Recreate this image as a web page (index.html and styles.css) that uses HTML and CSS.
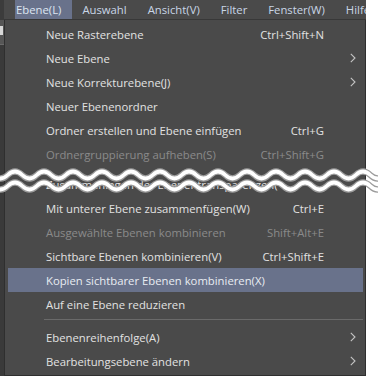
FILE: index.html
```html
<!DOCTYPE html>
<html lang="de">
<head>
  <meta charset="UTF-8" />
  <title>Ebene-Menü</title>
  <link rel="stylesheet" href="styles.css">
</head>
<body>
  <div class="app">
    <div class="side">
      <div class="side-top"></div>
      <div class="side-tool"><span class="side-icon"></span></div>
      <div class="side-rest"></div>
    </div>

    <div class="main">
      <div class="menubar">
        <span class="mb-item active">Ebene(L)</span>
        <span class="mb-item">Auswahl</span>
        <span class="mb-item">Ansicht(V)</span>
        <span class="mb-item">Filter</span>
        <span class="mb-item">Fenster(W)</span>
        <span class="mb-item">Hilfe(H)</span>
      </div>

      <div class="menu">
        <div class="row"><span class="label">Neue Rasterebene</span><span class="key">Ctrl+Shift+N</span><span class="sub"></span></div>
        <div class="row"><span class="label">Neue Ebene</span><span class="key"></span><span class="sub"><svg width="6" height="10" viewBox="0 0 6 10"><path d="M0.8 0.8 L5 5 L0.8 9.2" /></svg></span></div>
        <div class="row"><span class="label">Neue Korrekturebene(J)</span><span class="key"></span><span class="sub"><svg width="6" height="10" viewBox="0 0 6 10"><path d="M0.8 0.8 L5 5 L0.8 9.2" /></svg></span></div>
        <div class="row"><span class="label">Neuer Ebenenordner</span><span class="key"></span><span class="sub"></span></div>
        <div class="row"><span class="label">Ordner erstellen und Ebene einfügen</span><span class="key">Ctrl+G</span><span class="sub"></span></div>
        <div class="row off"><span class="label">Ordnergruppierung aufheben(S)</span><span class="key">Ctrl+Shift+G</span><span class="sub"></span></div>
        <div class="cut"></div>
        <div class="row"><span class="label">Zusammenlegen der Ebenentransparenzen(</span><span class="key"></span><span class="sub"></span></div>
        <div class="row"><span class="label">Mit unterer Ebene zusammenfügen(W)</span><span class="key">Ctrl+E</span><span class="sub"></span></div>
        <div class="row off"><span class="label">Ausgewählte Ebenen kombinieren</span><span class="key">Shift+Alt+E</span><span class="sub"></span></div>
        <div class="row"><span class="label">Sichtbare Ebenen kombinieren(V)</span><span class="key">Ctrl+Shift+E</span><span class="sub"></span></div>
        <div class="row hover"><span class="label">Kopien sichtbarer Ebenen kombinieren(X)</span><span class="key"></span><span class="sub"></span></div>
        <div class="row"><span class="label">Auf eine Ebene reduzieren</span><span class="key"></span><span class="sub"></span></div>
        <div class="sep"></div>
        <div class="row"><span class="label">Ebenenreihenfolge(A)</span><span class="key"></span><span class="sub"><svg width="6" height="10" viewBox="0 0 6 10"><path d="M0.8 0.8 L5 5 L0.8 9.2" /></svg></span></div>
        <div class="row"><span class="label">Bearbeitungsebene ändern</span><span class="key"></span><span class="sub"><svg width="6" height="10" viewBox="0 0 6 10"><path d="M0.8 0.8 L5 5 L0.8 9.2" /></svg></span></div>
      </div>
    </div>
  </div>

  <!-- break mark laid over the cut in the list -->
  <svg class="waves" width="378" height="40" viewBox="0 0 378 40">
    <defs>
      <path id="w" d="M-21.25 15 Q-14 8 -6.75 15 T7.75 15 T22.25 15 T36.75 15 T51.25 15 T65.75 15 T80.25 15 T94.75 15 T109.25 15 T123.75 15 T138.25 15 T152.75 15 T167.25 15 T181.75 15 T196.25 15 T210.75 15 T225.25 15 T239.75 15 T254.25 15 T268.75 15 T283.25 15 T297.75 15 T312.25 15 T326.75 15 T341.25 15 T355.75 15 T370.25 15 T384.75 15 T399.25 15" />
    </defs>
    <use href="#w" class="edge" />
    <use href="#w" class="core" />
    <use href="#w" class="edge" transform="translate(0 11)" />
    <use href="#w" class="core" transform="translate(0 11)" />
  </svg>
</body>
</html>
```

FILE: styles.css
```css
body { margin: 0; background: #fff; font-family: "Open Sans", "Noto Sans", sans-serif; font-size: 11.3px; overflow: hidden; }
.app { display: flex; height: 376px; position: relative; }

.side { width: 4px; display: flex; flex-direction: column; }
.side-top { height: 20px; background: #3c3c3c; }
.side-tool { height: 24px; background: #565656; border-bottom: 1px solid #6a6a6a; position: relative; }
.side-icon { position: absolute; left: 0; top: 6px; width: 3px; height: 9px; background: #d8d8d8; }
.side-rest { flex: 1; background: #3a3a3a; }

.main { width: 362px; display: flex; flex-direction: column; background: #4a4a4a; }

.menubar { height: 19px; display: flex; align-items: stretch; padding-left: 11px; border-bottom: 1px solid #383838; background: #4a4a4a; overflow: hidden; white-space: nowrap; }
.mb-item { display: flex; align-items: center; padding: 0 10.5px; color: #c9d6e6; line-height: 19px; }
.mb-item.active { background: #69728b; color: #dde6f2; padding-left: 1px; }

.menu { flex: 1; border-left: 1px solid #2f2f2f; border-right: 1px solid #2f2f2f; border-bottom: 1px solid #2f2f2f; padding: 2px 2px 0 3px; }
.row { height: 24px; display: flex; align-items: center; padding-left: 38px; color: #e2e2e2; white-space: nowrap; }
.row .label { flex: 1; }
.row .key { text-align: right; }
.row .sub { width: 39px; display: flex; align-items: center; }
.row .sub svg { margin-left: 26px; fill: none; stroke: #c4c4c4; stroke-width: 1.1; }
.row.off { color: #8a8a8a; }
.row.hover { background: #69728b; color: #e8ecf2; }

.cut { height: 6px; }
.sep { height: 1px; background: #6a6a6a; margin: 3px 0 5px 36px; }

.waves { position: absolute; left: 0; top: 160px; }
.waves .edge { fill: none; stroke: #9c9c9c; stroke-width: 6; }
.waves .core { fill: none; stroke: #fff; stroke-width: 3.6; }
```
